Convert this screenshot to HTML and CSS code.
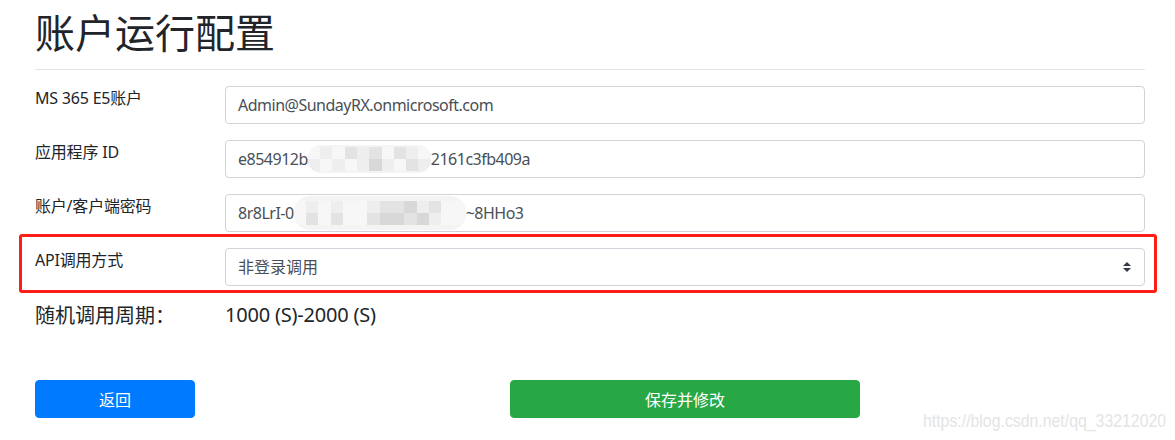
FILE: index.html
```html
<!DOCTYPE html>
<html lang="zh-CN">
<head>
<meta charset="utf-8">
<title>账户运行配置</title>
<link rel="stylesheet" href="styles.css">
</head>
<body>
<div class="container">
  <h1 class="title">账户运行配置</h1>
  <hr class="divider">

  <div class="form-row">
    <label class="form-label">MS 365 E5账户</label>
    <div class="form-control">Admin@SundayRX.onmicrosoft.com</div>
  </div>

  <div class="form-row">
    <label class="form-label">应用程序 ID</label>
    <div class="form-control">e854912b<span class="mosaic mosaic-1"><i class="w"></i><i class="a"></i><i class="w"></i><i class="b"></i><i class="a"></i><i class="b"></i><i class="w"></i><i class="b"></i><i class="a"></i><i class="w"></i><i class="a"></i><i class="w"></i><i class="a"></i><i class="w"></i><i class="a"></i><i class="c"></i><i class="a"></i><i class="w"></i><i class="b"></i><i class="a"></i></span>2161c3fb409a</div>
  </div>

  <div class="form-row">
    <label class="form-label">账户/客户端密码</label>
    <div class="form-control">8r8LrI-0<span class="mosaic mosaic-2"><i class="w"></i><i class="a"></i><i class="w"></i><i class="a"></i><i class="w"></i><i class="w"></i><i class="a"></i><i class="b"></i><i class="b"></i><i class="c"></i><i class="a"></i><i class="b"></i><i class="w"></i><i class="w"></i><i class="w"></i><i class="b"></i><i class="w"></i><i class="b"></i><i class="w"></i><i class="w"></i><i class="b"></i><i class="c"></i><i class="c"></i><i class="b"></i><i class="c"></i><i class="a"></i><i class="w"></i><i class="w"></i></span>~8HHo3</div>
  </div>

  <div class="annotation">
    <div class="form-row form-row-last">
      <label class="form-label">API调用方式</label>
      <div class="form-control form-select">
        <span>非登录调用</span>
        <svg class="select-arrows" width="8" height="10" viewBox="0 0 4 5"><path d="M2 0L0 2h4zm0 5L0 3h4z" fill="#343a40"/></svg>
      </div>
    </div>
  </div>

  <div class="period-row">
    <span class="period-label">随机调用周期：</span>
    <span class="period-value">1000 (S)-2000 (S)</span>
  </div>

  <div class="actions">
    <button class="btn btn-back">返回</button>
    <button class="btn btn-save">保存并修改</button>
  </div>
</div>
<div class="watermark">https://blog.csdn.net/qq_33212020</div>
</body>
</html>
```
FILE: styles.css
```css
html, body {
  margin: 0;
  padding: 0;
  background: #fff;
}
body {
  width: 1175px;
  height: 440px;
  overflow: hidden;
  position: relative;
  font-family: "Noto Sans", "Noto Sans CJK SC", sans-serif;
  color: #212529;
  font-size: 16px;
  line-height: 1.5;
}
.container {
  padding: 0 30px 0 35px;
}
.title {
  margin: 0;
  padding-top: 7px;
  font-family: "Noto Sans CJK SC", sans-serif;
  font-size: 40px;
  font-weight: 400;
  line-height: 48px;
  color: #212529;
}
.divider {
  margin: 14px 0 16px;
  border: 0;
  border-top: 1px solid #e5e5e5;
  height: 0;
}
.form-row {
  display: grid;
  grid-template-columns: 190px 1fr;
  margin-bottom: 16px;
}
.form-row-last {
  margin-bottom: 0;
}
.form-label {
  font-size: 16px;
  line-height: 24px;
  color: #212529;
  letter-spacing: -0.2px;
}
.form-control {
  box-sizing: border-box;
  height: 38px;
  padding: 0 12px;
  display: flex;
  align-items: center;
  border: 1px solid #ced4da;
  border-radius: 4px;
  color: #495057;
  font-size: 16px;
  letter-spacing: -0.5px;
  white-space: nowrap;
}
.form-select {
  justify-content: space-between;
  letter-spacing: 0;
}
.select-arrows {
  margin-right: 1px;
}
.mosaic {
  display: inline-grid;
  grid-auto-rows: 12px;
  height: 28px;
  overflow: hidden;
  border-radius: 13px;
  background: #f4f4f4;
  align-content: center;
}
.mosaic-1 {
  width: 123px;
  grid-template-columns: repeat(10, 12.3px);
}
.mosaic-2 {
  width: 172px;
  height: 34px;
  grid-template-columns: repeat(14, 12.3px);
  border-radius: 16px;
}
.mosaic i { display: block; }
.mosaic .w { background: #f7f7f7; }
.mosaic .a { background: #eeeeee; }
.mosaic .b { background: #e3e3e3; }
.mosaic .c { background: #d8d8d8; }

.annotation {
  margin: -14px -12px 0 -16px;
  padding: 11px 9px 4px 13px;
  border: 3px solid #fd1f17;
  border-radius: 3px;
}
.period-row {
  display: grid;
  grid-template-columns: 190px 1fr;
  margin-top: 7px;
  font-size: 20px;
  line-height: 30px;
  color: #212529;
}
.period-label {
  font-family: "Noto Sans CJK SC", sans-serif;
}
.period-value {
  letter-spacing: -0.2px;
}
.actions {
  display: flex;
  margin-top: 50px;
}
.btn {
  box-sizing: border-box;
  height: 38px;
  border: 1px solid transparent;
  border-radius: 4px;
  color: #fff;
  font-family: "Noto Sans CJK SC", sans-serif;
  font-size: 16px;
  line-height: 1.5;
  padding: 0;
}
.btn-back {
  width: 160px;
  background: #007bff;
  border-color: #007bff;
}
.btn-save {
  width: 350px;
  margin-left: 315px;
  background: #28a745;
  border-color: #28a745;
}
.watermark {
  position: absolute;
  left: 923px;
  top: 410px;
  font-family: "Liberation Sans", sans-serif;
  font-size: 18px;
  line-height: 22px;
  color: #e4e4e4;
  transform: scaleX(0.88);
  transform-origin: left top;
  white-space: nowrap;
}
```
